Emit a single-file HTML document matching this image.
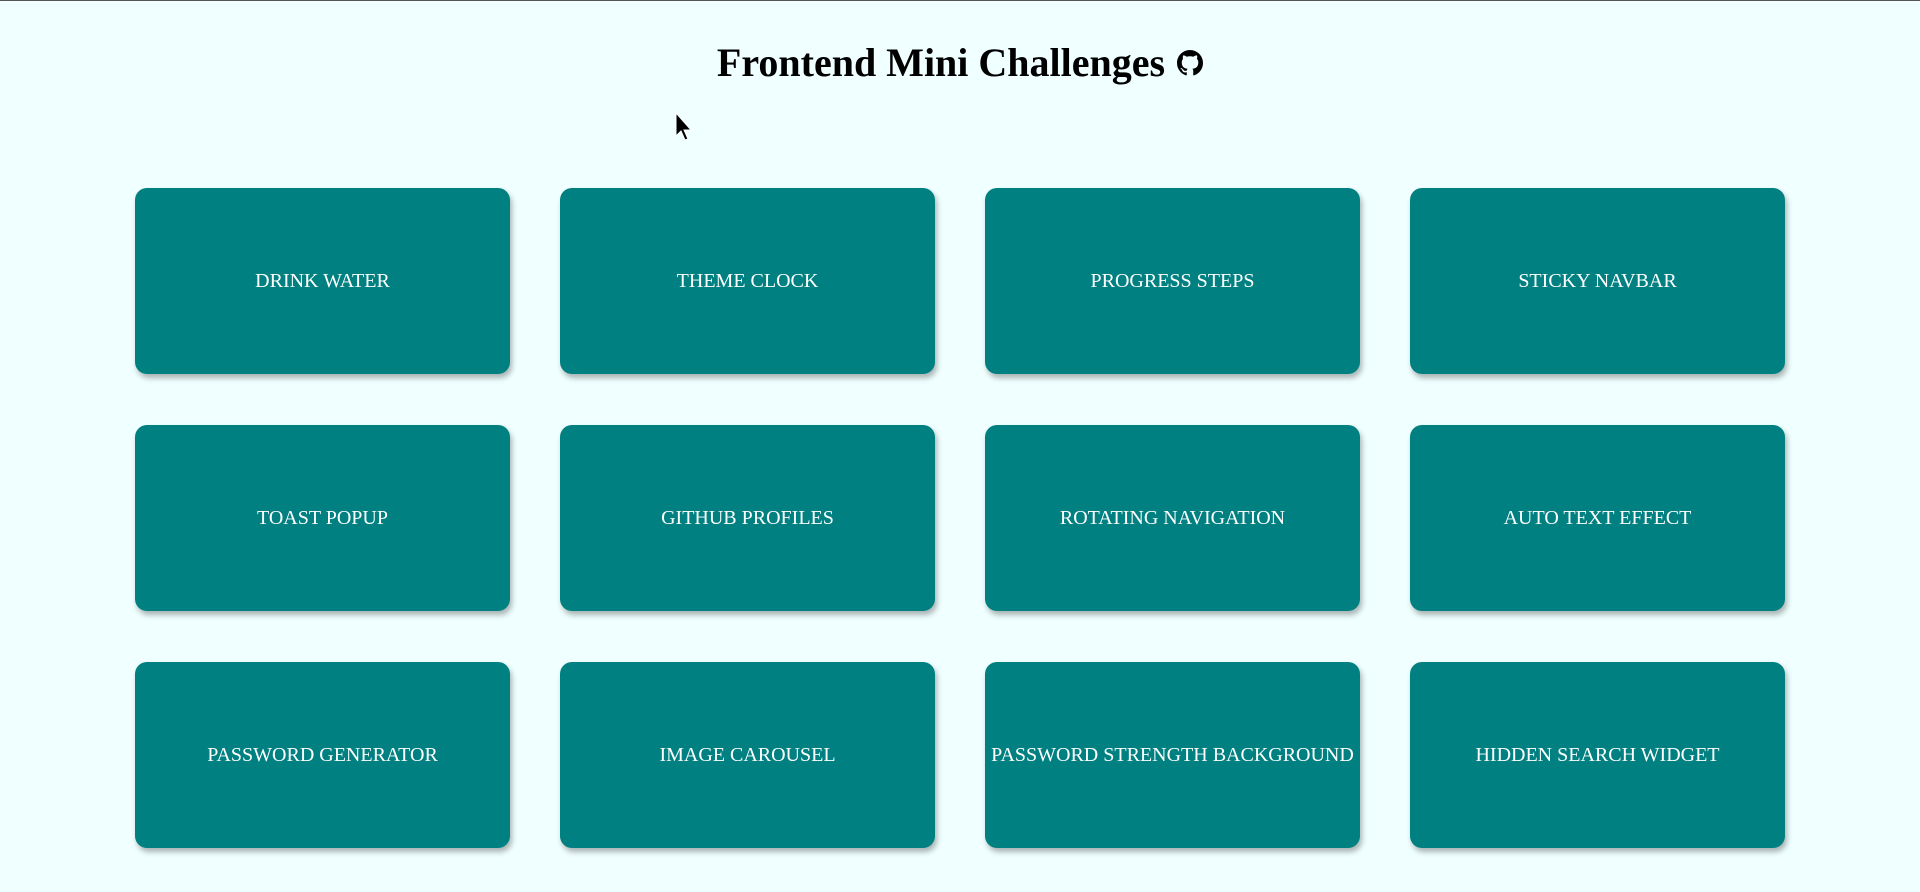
<!DOCTYPE html>
<html><head><meta charset="utf-8"><style>
html,body{margin:0;padding:0;}
body{width:1920px;height:892px;background:#f0ffff;border-top:1px solid #555;box-sizing:border-box;font-family:"Liberation Serif",serif;position:relative;overflow:hidden;}
h1{position:absolute;top:32px;left:0;width:1920px;text-align:center;margin:0;font-size:40px;font-weight:bold;line-height:60px;color:#000;}
h1 svg{vertical-align:0px;margin-left:2px;}
.card{position:absolute;width:375px;height:186px;background:#008080;border-radius:12px;box-shadow:2px 4px 6px rgba(0,0,0,0.3);color:#fff;font-size:20px;display:flex;align-items:center;justify-content:center;text-align:center;white-space:nowrap;}
</style></head><body>
<h1>Frontend Mini Challenges <svg width="26" height="26" viewBox="0 0 16 16"><path fill="#000" d="M8 0C3.58 0 0 3.580 0 8c0 3.54 2.29 6.53 5.470 7.590.4.07.55-.17.55-.38 0-.19-.01-.82-.01-1.49-2.01.37-2.53-.49-2.690-.94-.09-.23-.48-.94-.82-1.13-.28-.15-.68-.52-.01-.53.63-.01 1.08.58 1.230.82.72 1.21 1.87.87 2.330.66.07-.52.28-.87.51-1.07-1.78-.2-3.64-.89-3.64-3.95 0-.87.31-1.59.82-2.15-.08-.2-.36-1.02.08-2.12 0 0 .67-.21 2.2.82.64-.18 1.32-.27 2-.27.68 0 1.36.09 2 .27 1.53-1.04 2.2-.82 2.2-.82.44 1.1.16 1.92.08 2.12.51.56.82 1.27.82 2.15 0 3.07-1.87 3.75-3.65 3.95.29.25.54.73.54 1.48 0 1.07-.01 1.93-.01 2.2 0 .21.15.46.55.38A8.013 8.013 0 0016 8c0-4.42-3.58-8-8-8z"/></svg></h1>
<svg style="position:absolute;left:675px;top:111px" width="20" height="30" viewBox="0 0 20 30"><path d="M1 1 L1 24 L6 19 L10 28 L13 27 L9 18 L16 18 Z" fill="#000" stroke="#fff" stroke-width="1"/></svg>
<div class="card" style="left:135px;top:187px">DRINK WATER</div>
<div class="card" style="left:560px;top:187px">THEME CLOCK</div>
<div class="card" style="left:985px;top:187px">PROGRESS STEPS</div>
<div class="card" style="left:1410px;top:187px">STICKY NAVBAR</div>
<div class="card" style="left:135px;top:424px">TOAST POPUP</div>
<div class="card" style="left:560px;top:424px">GITHUB PROFILES</div>
<div class="card" style="left:985px;top:424px">ROTATING NAVIGATION</div>
<div class="card" style="left:1410px;top:424px">AUTO TEXT EFFECT</div>
<div class="card" style="left:135px;top:661px">PASSWORD GENERATOR</div>
<div class="card" style="left:560px;top:661px">IMAGE CAROUSEL</div>
<div class="card" style="left:985px;top:661px">PASSWORD STRENGTH BACKGROUND</div>
<div class="card" style="left:1410px;top:661px">HIDDEN SEARCH WIDGET</div>
</body></html>
